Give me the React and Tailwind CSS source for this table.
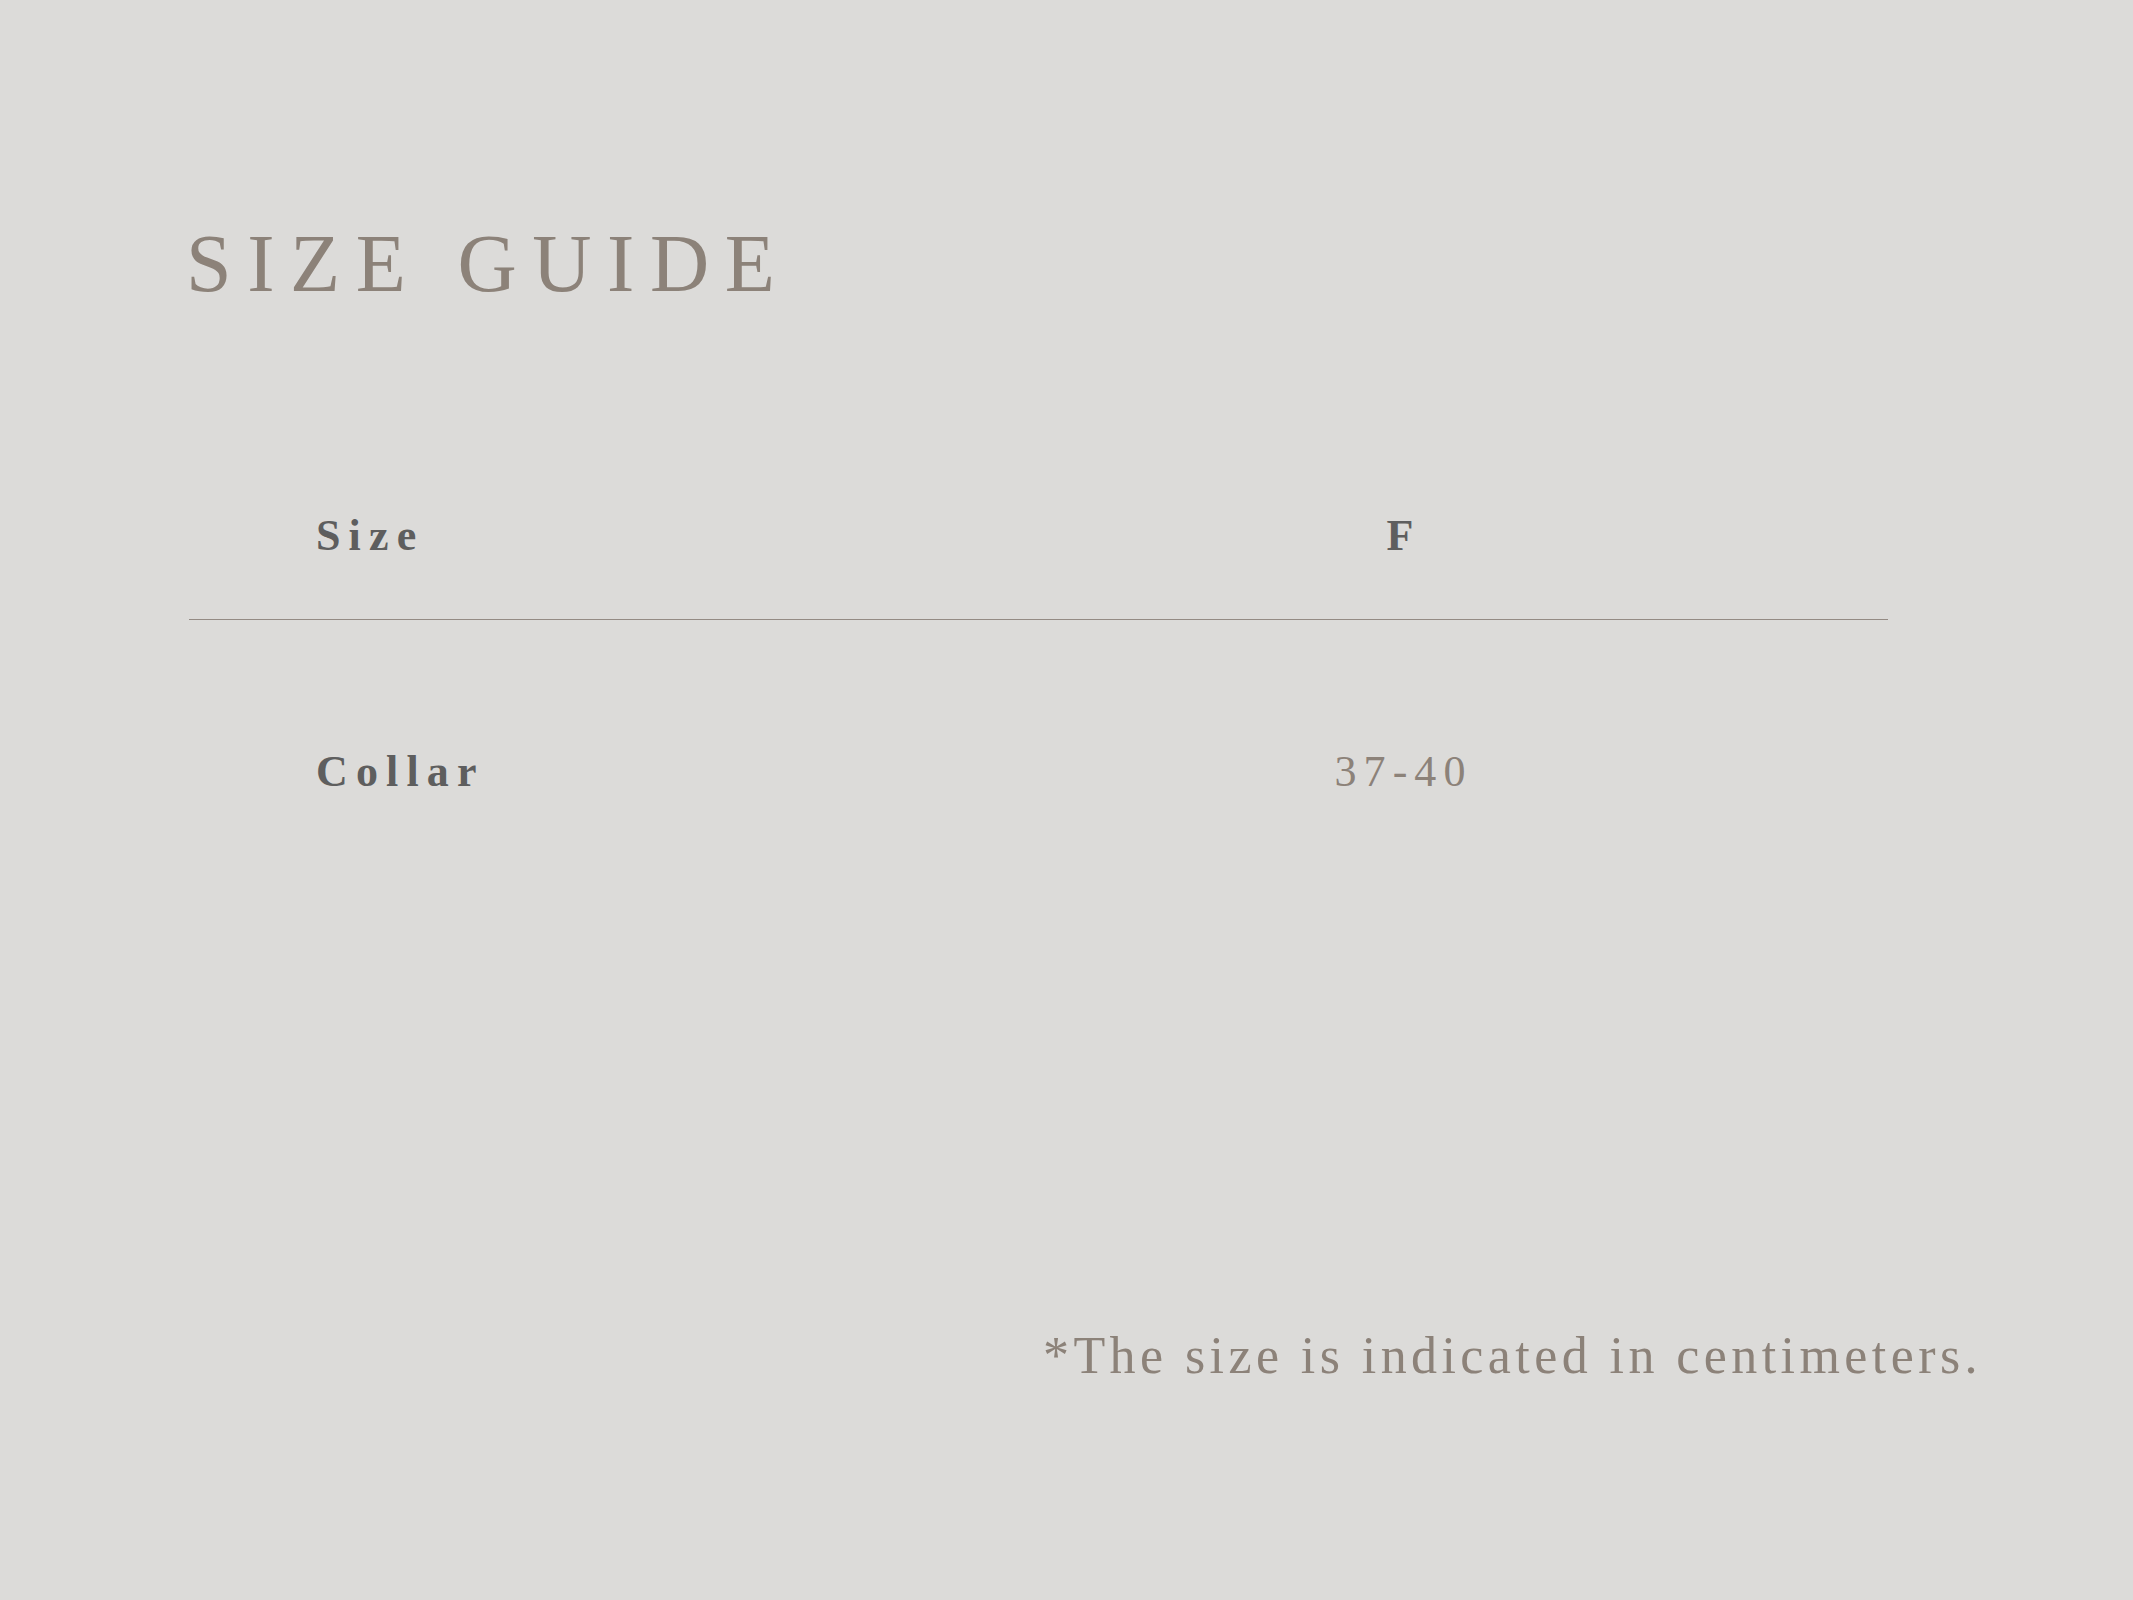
import React from 'react';

const serif = { fontFamily: '"Liberation Serif", "DejaVu Serif", serif' };

const rows = [{ label: 'Collar', value: '37-40' }];

export default function App() {
    return (
        <div className="w-full h-[1600px] bg-[#dcdbd9] text-[#8c8279] overflow-hidden" style={serif}>
            <div className="pl-[186px] pt-[223px]">
                <h1 className="text-[82px] leading-none tracking-[0.19em] font-normal">SIZE GUIDE</h1>
            </div>

            <div className="ml-[189px] w-[1699px] mt-[209px]">
                <div className="grid grid-cols-[723px_976px] items-end pb-[61px] border-b-[1.5px] border-[#948b84]">
                    <span className="pl-[127px] text-[44px] leading-none font-bold tracking-[0.185em] text-[#5e5e5e]">Size</span>
                    <span className="text-center text-[44px] leading-none font-bold text-[#5e5e5e]">F</span>
                </div>
                {rows.map((row) => (
                    <div key={row.label} className="grid grid-cols-[723px_976px] items-end pt-[130px]">
                        <span className="pl-[127px] text-[44px] leading-none font-bold tracking-[0.185em] text-[#5e5e5e]">{row.label}</span>
                        <span className="text-center text-[44px] leading-none tracking-[0.16em] pl-[0.16em]">{row.value}</span>
                    </div>
                ))}
            </div>

            <div className="flex justify-end pr-[151px] mt-[536px]">
                <p className="text-[52px] leading-none tracking-[0.085em]">*The size is indicated in centimeters.</p>
            </div>
        </div>
    );
}
